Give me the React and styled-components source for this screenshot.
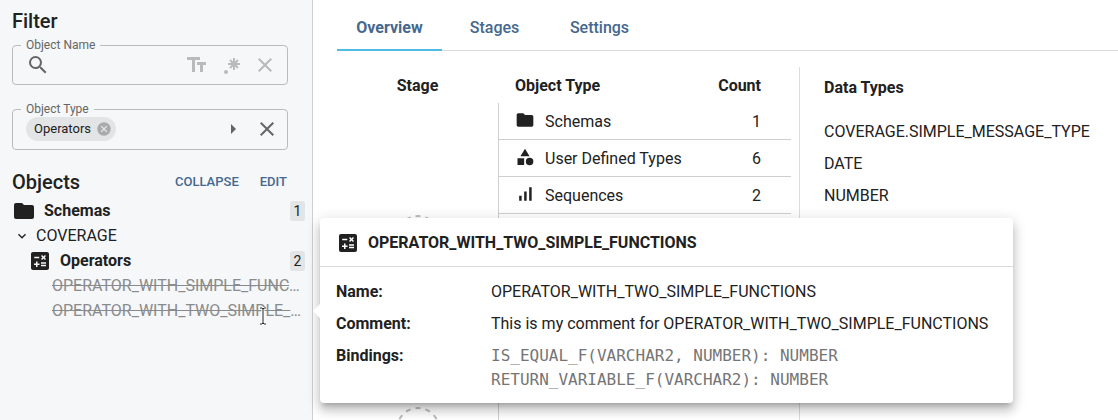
import React from "react";
import styled, { createGlobalStyle } from "styled-components";

const line = "#cfcfcf";

const Global = createGlobalStyle`
  * { box-sizing: border-box; }
  body {
    margin: 0;
    background: #fff;
    color: #212121;
    font: 400 16px/24px Roboto, "Liberation Sans", sans-serif;
  }
  button, input { font: inherit; color: inherit; }
  h2, p, ul, dl, dd { margin: 0; padding: 0; }
  svg { flex: none; }
`;

const Page = styled.div`
  display: flex;
  min-height: 100vh;
  overflow: hidden;
`;

const Sidebar = styled.aside`
  flex: 0 0 313px;
  min-width: 0;
  padding: 8px 0 0 12px;
  background: #f5f7f9;
  border-right: 1px solid ${line};
`;

const Heading = styled.h2`
  font-size: 20px;
  font-weight: 500;
  line-height: 26px;
`;

const Field = styled.fieldset`
  display: flex;
  align-items: center;
  height: ${(p) => p.$height}px;
  margin: ${(p) => p.$top}px 24px 0 0;
  padding: 0 ${(p) => p.$inset}px 8px 13px;
  min-width: 0;
  border: 1px solid #b9bbbd;
  border-radius: 4px;
  color: #666;
`;

const Legend = styled.legend`
  margin-left: -5px;
  padding: 0 5px;
  height: 16px;
  font-size: 12px;
  line-height: 16px;
  color: #666;
`;

const SearchInput = styled.input`
  flex: 1;
  min-width: 0;
  padding: 0 8px;
  border: 0;
  background: transparent;
  outline: 0;
`;

const IconButton = styled.button`
  display: grid;
  place-items: center;
  width: 24px;
  height: 24px;
  padding: 0;
  border: 0;
  background: transparent;
  color: ${(p) => (p.$muted ? "#b9babb" : "#666")};
`;

const Tools = styled.div`
  display: flex;
  gap: 10px;
  margin-left: auto;
`;

const Chip = styled.span`
  display: flex;
  align-items: center;
  gap: 5px;
  height: 24px;
  padding: 0 4px 0 8px;
  border-radius: 12px;
  background: #e2e4e5;
  color: #212121;
  font-size: 13px;
`;

const ChipDelete = styled(IconButton)`
  width: 16px;
  height: 16px;
  color: #a8aaab;
`;

const ObjectsHead = styled.div`
  display: flex;
  align-items: center;
  justify-content: space-between;
  margin: 19px 25px 3px 0;
`;

const Actions = styled.div`
  display: flex;
  gap: 21px;
`;

const TextButton = styled.button`
  padding: 0;
  border: 0;
  background: transparent;
  color: #45688e;
  font-size: 13px;
  font-weight: 500;
`;

const Tree = styled.ul`
  list-style: none;
`;

const TreeRow = styled.li`
  display: flex;
  align-items: center;
  height: 25px;
  padding: 0 7px 0 ${(p) => p.$indent || 0}px;
  gap: ${(p) => p.$gap || 8}px;
  font-weight: ${(p) => (p.$strong ? 700 : 400)};
`;

const Badge = styled.span`
  width: 15px;
  height: 20px;
  margin-left: auto;
  border-radius: 3px;
  background: #e2e4e5;
  text-align: center;
  font-size: 14px;
  line-height: 20px;
  font-weight: 400;
`;

const Removed = styled.span`
  overflow: hidden;
  white-space: nowrap;
  text-overflow: ellipsis;
  text-decoration: line-through;
  color: #8a8b8c;
`;

const Main = styled.main`
  flex: 1;
  min-width: 0;
  padding: 3px 0 0 24px;
  display: flex;
  flex-direction: column;
`;

const Tabs = styled.nav`
  display: flex;
  flex: none;
  border-bottom: 1px solid #dcdcdc;
`;

const Tab = styled.button`
  flex: 0 0 105px;
  height: 48px;
  margin-bottom: -1px;
  padding: 4px 0 0;
  border: 0;
  border-bottom: 2px solid ${(p) => (p.$active ? "#4fbce6" : "transparent")};
  background: transparent;
  color: #45688e;
  font-weight: ${(p) => (p.$active ? 700 : 500)};
`;

const Content = styled.div`
  display: flex;
  flex: 1;
  padding-top: 16px;
`;

const StageColumn = styled.section`
  display: flex;
  flex-direction: column;
  align-items: center;
  flex: 0 0 161px;
  padding-top: 7px;
`;

const ColumnTitle = styled.h2`
  font-size: 16px;
  font-weight: 700;
  line-height: 24px;
`;

const StageRings = styled.div`
  display: flex;
  flex-direction: column;
  gap: 148px;
  padding-top: 117px;
  height: 0;
`;

const Types = styled.section`
  display: flex;
  flex-direction: column;
  flex: 0 0 293px;
`;

const TypeTable = styled.table`
  width: 100%;
  border-spacing: 0;
  th { height: 36px; padding: 2px 17px 0; text-align: left; font-weight: 700; }
  td { height: 37px; padding: 1px 16px 0; border-bottom: 1px solid ${line}; }
  td:first-child { border-left: 1px solid ${line}; }
  th:last-child, td:last-child { padding-right: 30px; text-align: right; }
`;

const TypesRule = styled.div`
  flex: 1;
  border-left: 1px solid ${line};
`;

const TypeName = styled.span`
  display: flex;
  align-items: center;
  gap: 10px;
  svg { margin-bottom: 4px; }
`;

const DataTypes = styled.section`
  flex: 1;
  min-width: 0;
  margin-left: 8px;
  padding: 9px 0 0 24px;
  border-left: 1px solid #dcdcdc;
`;

const DataList = styled.ul`
  list-style: none;
  padding-top: 16px;
  li { line-height: 32px; }
`;

const Popover = styled.div`
  position: absolute;
  top: 218px;
  left: 320px;
  background: #fff;
  border-radius: 4px;
  box-shadow: 0 5px 5px -3px rgba(0,0,0,.2), 0 8px 10px 1px rgba(0,0,0,.14), 0 3px 14px 2px rgba(0,0,0,.12);
  &::before {
    content: "";
    position: absolute;
    left: -7px;
    top: 86px;
    border: 7px solid transparent;
    border-left: 0;
    border-right-color: #fff;
  }
`;

const PopoverTitle = styled.h2`
  display: flex;
  align-items: center;
  gap: 8px;
  height: 49px;
  padding: 1px 16px 0;
  border-bottom: 1px solid #dcdcdc;
  font-size: 16px;
  font-weight: 700;
`;

const Details = styled.dl`
  display: grid;
  grid-template-columns: 147px minmax(506px, auto);
  gap: 8px;
  padding: 13px 16px 11px;
  dt { font-weight: 700; }
  dd { white-space: nowrap; }
`;

const Code = styled.code`
  display: block;
  color: #757575;
  font: 16px/24px "DejaVu Sans Mono", monospace;
`;

const Cursor = styled.svg`
  position: absolute;
  top: 307px;
  left: 259px;
`;

const icons = {
  folder: "M10 4H4c-1.1 0-2 .9-2 2v12c0 1.1.9 2 2 2h16c1.1 0 2-.9 2-2V8c0-1.1-.9-2-2-2h-8z",
  search: "M15.5 14h-.79l-.28-.27A6.47 6.47 0 0 0 16 9.5 6.5 6.5 0 1 0 9.5 16c1.61 0 3.09-.59 4.23-1.57l.27.28v.79l5 4.99L20.49 19zm-6 0C7.01 14 5 11.99 5 9.5S7.01 5 9.5 5 14 7.01 14 9.5 11.99 14 9.5 14",
  close: "M19 6.41 17.59 5 12 10.59 6.41 5 5 6.41 10.59 12 5 17.59 6.41 19 12 13.41 17.59 19 19 17.59 13.41 12z",
  right: "m10 17 5-5-5-5z",
  down: "M7.41 8.59 12 13.17l4.59-4.58L18 10l-6 6-6-6z",
  cancel: "M12 2C6.47 2 2 6.47 2 12s4.47 10 10 10 10-4.47 10-10S17.53 2 12 2m5 13.59L15.59 17 12 13.41 8.41 17 7 15.59 10.59 12 7 8.41 8.41 7 12 10.59 15.59 7 17 8.41 13.41 12z",
  shapes: "M12 2 6.5 11h11zM17.5 13a4.5 4.5 0 1 0 0 9 4.5 4.5 0 0 0 0-9M3 13.5h8v8H3z",
  bars: "M5 14h3v6H5zm6-5h3v11h-3zm6-5h3v16h-3z",
  operators: "M19 3H5c-1.100 0-2 .9-2 2v14c0 1.100.9 2 2 2h14c1.100 0 2-.9 2-2V5c0-1.100-.9-2-2-2m-5.970 4.060L14.090 6l1.410 1.410L16.910 6l1.060 1.060-1.410 1.410 1.410 1.410-1.060 1.060-1.410-1.400-1.410 1.410-1.060-1.060 1.410-1.410zm-6.780.660h5v1.500h-5zM11.500 16h-2v2H8v-2H6v-1.500h2v-2h1.500v2h2zm6.500 1.250h-5v-1.500h5zm0-2.500h-5v-1.500h5z",
  textCase: "M2 4h13v3h-5v12H7V7H2zm19 5h-9v3h3v7h3v-7h3z",
};

function Icon({ name, size = 24 }) {
  return (
    <svg width={size} height={size} viewBox="0 0 24 24" fill="currentColor" aria-hidden="true">
      <path d={icons[name]} />
    </svg>
  );
}

function RegexIcon() {
  return (
    <svg width="20" height="20" viewBox="0 0 20 20" aria-hidden="true">
      <path d="M13 3v12M7 9h12M9 5l8 8M17 5l-8 8" stroke="currentColor" strokeWidth="2" />
      <circle cx="5" cy="17" r="2" fill="currentColor" />
    </svg>
  );
}

function Ring() {
  return (
    <svg width="44" height="44" viewBox="0 0 44 44" aria-hidden="true">
      <circle cx="22" cy="22" r="21" fill="none" stroke="#bdbdbd" strokeWidth="2" pathLength="130" strokeDasharray="5 5" strokeDashoffset="2.5" transform="rotate(-90 22 22)" />
    </svg>
  );
}

const types = [
  ["folder", "Schemas", 1],
  ["shapes", "User Defined Types", 6],
  ["bars", "Sequences", 2],
];

export default function App() {
  return (
    <Page>
      <Global />
      <Sidebar>
        <Heading>Filter</Heading>
        <Field $height={48} $top={3} $inset={10}>
          <Legend>Object Name</Legend>
          <Icon name="search" />
          <SearchInput aria-label="Object Name" />
          <Tools>
            <IconButton $muted aria-label="Match case"><Icon name="textCase" /></IconButton>
            <IconButton $muted aria-label="Regular expression"><RegexIcon /></IconButton>
            <IconButton $muted aria-label="Clear name"><Icon name="close" /></IconButton>
          </Tools>
        </Field>
        <Field $height={49} $top={16} $inset={8}>
          <Legend>Object Type</Legend>
          <Chip>
            Operators
            <ChipDelete aria-label="Remove Operators"><Icon name="cancel" size={16} /></ChipDelete>
          </Chip>
          <Tools>
            <IconButton aria-label="Open"><Icon name="right" /></IconButton>
            <IconButton aria-label="Clear type"><Icon name="close" /></IconButton>
          </Tools>
        </Field>
        <ObjectsHead>
          <Heading>Objects</Heading>
          <Actions>
            <TextButton>COLLAPSE</TextButton>
            <TextButton>EDIT</TextButton>
          </Actions>
        </ObjectsHead>
        <Tree>
          <TreeRow $strong><Icon name="folder" />Schemas<Badge>1</Badge></TreeRow>
          <TreeRow $indent={2} $gap={6}><Icon name="down" size={16} />COVERAGE</TreeRow>
          <TreeRow $strong $indent={16}><Icon name="operators" />Operators<Badge>2</Badge></TreeRow>
          <TreeRow $indent={40}><Removed>OPERATOR_WITH_SIMPLE_FUNCTIONS</Removed></TreeRow>
          <TreeRow $indent={40}><Removed>OPERATOR_WITH_TWO_SIMPLE_FUNCTIONS</Removed></TreeRow>
        </Tree>
      </Sidebar>
      <Main>
        <Tabs>
          <Tab $active>Overview</Tab>
          <Tab>Stages</Tab>
          <Tab>Settings</Tab>
        </Tabs>
        <Content>
          <StageColumn>
            <ColumnTitle>Stage</ColumnTitle>
            <StageRings><Ring /><Ring /></StageRings>
          </StageColumn>
          <Types>
            <TypeTable>
              <thead><tr><th>Object Type</th><th>Count</th></tr></thead>
              <tbody>
                {types.map(([icon, name, count]) => (
                  <tr key={name}>
                    <td><TypeName><Icon name={icon} size={20} />{name}</TypeName></td>
                    <td>{count}</td>
                  </tr>
                ))}
              </tbody>
            </TypeTable>
            <TypesRule />
          </Types>
          <DataTypes>
            <ColumnTitle>Data Types</ColumnTitle>
            <DataList>
              <li>COVERAGE.SIMPLE_MESSAGE_TYPE</li>
              <li>DATE</li>
              <li>NUMBER</li>
            </DataList>
          </DataTypes>
        </Content>
      </Main>
      <Popover>
        <PopoverTitle><Icon name="operators" />OPERATOR_WITH_TWO_SIMPLE_FUNCTIONS</PopoverTitle>
        <Details>
          <dt>Name:</dt>
          <dd>OPERATOR_WITH_TWO_SIMPLE_FUNCTIONS</dd>
          <dt>Comment:</dt>
          <dd>This is my comment for OPERATOR_WITH_TWO_SIMPLE_FUNCTIONS</dd>
          <dt>Bindings:</dt>
          <dd>
            <Code>IS_EQUAL_F(VARCHAR2, NUMBER): NUMBER</Code>
            <Code>RETURN_VARIABLE_F(VARCHAR2): NUMBER</Code>
          </dd>
        </Details>
      </Popover>
      <Cursor width="8" height="18" viewBox="0 0 8 18" aria-hidden="true">
        <path d="M1 1h2l1 1 1-1h2M4 2v14M1 17h2l1-1 1 1h2" fill="none" stroke="#fff" strokeWidth="3" />
        <path d="M1 1h2l1 1 1-1h2M4 2v14M1 17h2l1-1 1 1h2" fill="none" stroke="#222" />
      </Cursor>
    </Page>
  );
}
